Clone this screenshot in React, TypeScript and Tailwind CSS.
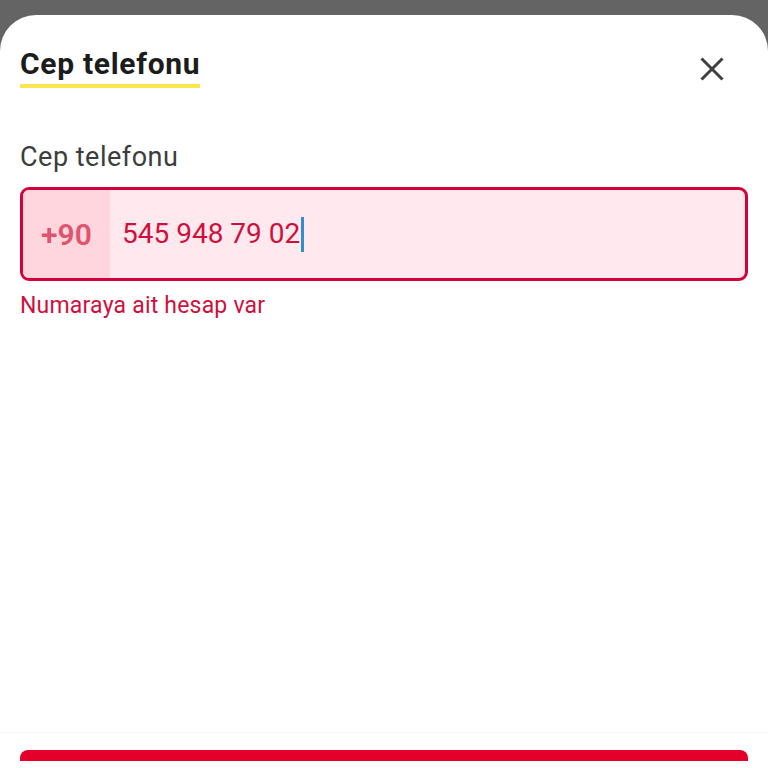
import { useState } from "react";

export default function App() {
    const [phone] = useState("545 948 79 02");

    return (
        <div className="h-[768px] w-[768px] overflow-hidden bg-[#646464] pt-[15px] flex flex-col" style={{ fontFamily: "Roboto, 'Noto Sans', sans-serif" }}>
            <div className="flex-1 bg-white rounded-t-[36px] flex flex-col">
                {/* Header */}
                <div className="flex justify-between items-start pl-5 pr-[44px] pt-[32px]">
                    <div className="flex flex-col items-start">
                        <h1 className="text-[30px] leading-[33px] font-bold tracking-[0.7px] text-[#1c1c1c]">Cep telefonu</h1>
                        <div className="mt-[4px] h-1 w-full bg-[#fbe54f]"></div>
                    </div>
                    <button className="mt-[10px]" aria-label="Kapat">
                        <svg width="24" height="24" viewBox="0 0 24 24" fill="none" stroke="#404040" strokeWidth="3" strokeLinecap="butt">
                            <line x1="1.5" y1="1.5" x2="22.5" y2="22.5" />
                            <line x1="22.5" y1="1.5" x2="1.5" y2="22.5" />
                        </svg>
                    </button>
                </div>

                {/* Phone form */}
                <div className="px-5 mt-[54px]">
                    <label className="block text-[27px] leading-[30px] tracking-[0.5px] text-[#3d3d3d]">Cep telefonu</label>
                    <div className="mt-[15px] h-[94px] flex border-[3px] border-[#d4003a] rounded-[9px] overflow-hidden bg-[#ffe9ee]">
                        <div className="w-[87px] bg-[#ffd6de] flex items-center justify-center">
                            <span className="text-[30px] font-semibold text-[#e0546e]">+90</span>
                        </div>
                        <div className="flex items-center pl-3">
                            <span className="text-[28px] text-[#d0103c]">{phone}</span>
                            <span className="ml-[1px] w-[3px] h-[35px] bg-[#2f8fcf]"></span>
                        </div>
                    </div>
                    <p className="mt-[11px] text-[23px] leading-[27px] tracking-[0.2px] text-[#d0103c]">Numaraya ait hesap var</p>
                </div>

                <div className="flex-1"></div>

                {/* Submit */}
                <div className="border-t border-[#f6f6f6] px-5 pt-[11px]">
                    <button className="w-full h-[11px] rounded-t-[8px] bg-[#e4002b]"></button>
                </div>
            </div>
        </div>
    );
}
